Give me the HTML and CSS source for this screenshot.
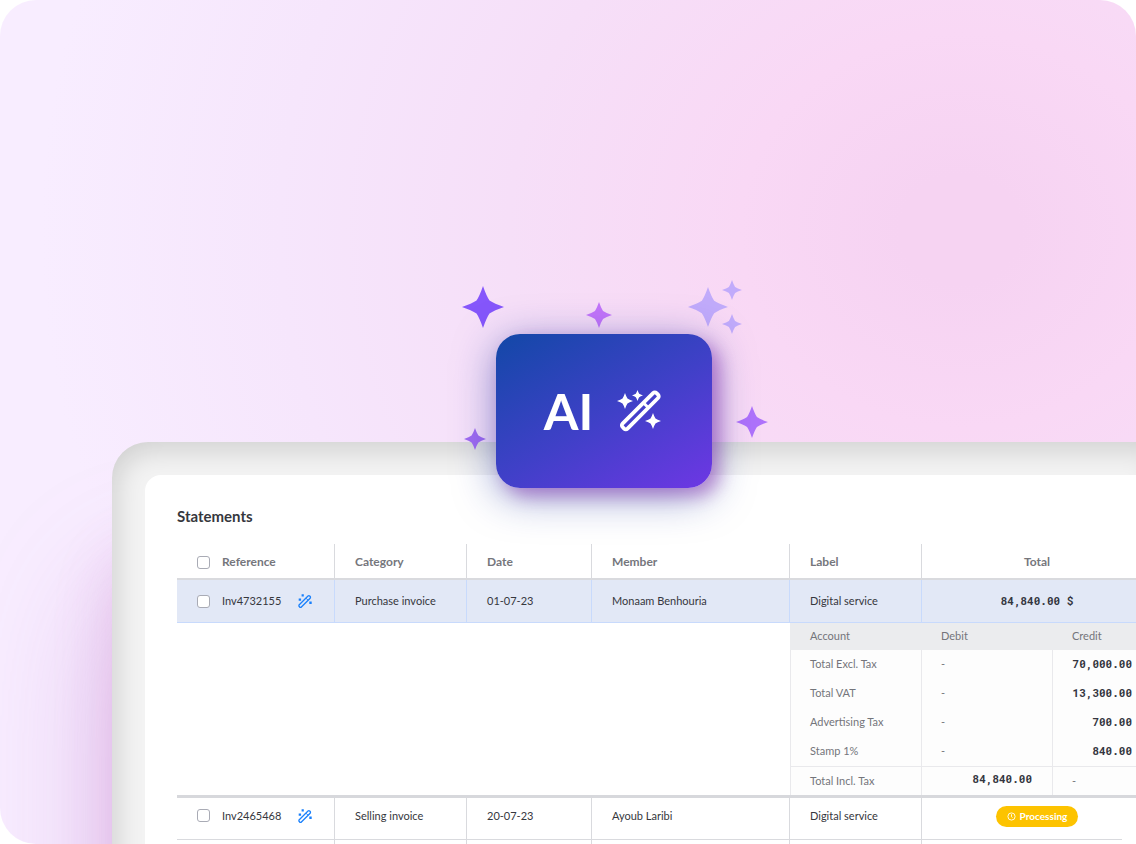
FILE: index.html
```html
<!DOCTYPE html>
<html lang="en">
<head>
<meta charset="utf-8">
<title>Statements</title>
<link rel="stylesheet" href="styles.css">
</head>
<body>
<svg class="defs" aria-hidden="true">
  <symbol id="star" viewBox="0 0 24 24"><path d="M12 0Q13.9 5.6 15.7 8.3Q18.4 10.1 24 12Q18.4 13.9 15.7 15.7Q13.9 18.4 12 24Q10.1 18.4 8.3 15.7Q5.6 13.9 0 12Q5.6 10.1 8.3 8.3Q10.1 5.6 12 0Z"/></symbol>
  <symbol id="wand" viewBox="0 0 14 14">
    <rect x="-7.4" y="-1.5" width="14.8" height="3" rx="1.2" transform="translate(6.7 7.5) rotate(-45)" fill="none" stroke="currentColor" stroke-width="1.3"/>
    <path d="M8 4.2l1.9 1.9" stroke="currentColor"/>
    <path d="M.7 4.4h2.4v2.4H.7zM3.6.2h2.2v2.2H3.6zM11.3 7.5h2.4v2.4h-2.4z"/>
  </symbol>
</svg>
<main class="stage">
  <section class="hero">
    <svg class="star star-a"><use href="#star"/></svg>
    <svg class="star star-b"><use href="#star"/></svg>
    <svg class="star star-c"><use href="#star"/></svg>
    <svg class="star star-d"><use href="#star"/></svg>
    <svg class="star star-e"><use href="#star"/></svg>
    <svg class="star star-f"><use href="#star"/></svg>
    <svg class="star star-g"><use href="#star"/></svg>
    <div class="ai-card">
      <span>AI</span>
      <svg class="ai-wand" viewBox="0 0 45 43">
        <rect x="-24" y="-3.5" width="48" height="7" rx="2.4" transform="translate(23.3 20.8) rotate(-45)" fill="none" stroke="#fff" stroke-width="3.8"/>
        <path d="M26.4 12.8l5.2 5.2" stroke="#fff" stroke-width="3"/>
        <use href="#star" x="0" y="3" width="16" height="16"/>
        <use href="#star" x="15" y="0" width="11" height="11"/>
        <use href="#star" x="28" y="23" width="16" height="16"/>
      </svg>
    </div>
  </section>
  <section class="device">
    <div class="screen">
      <h1>Statements</h1>
      <table class="statements">
        <colgroup><col class="c-ref"><col class="c-cat"><col class="c-date"><col class="c-member"><col class="c-label"><col></colgroup>
        <thead>
          <tr>
            <th><label class="ref"><input type="checkbox">Reference</label></th>
            <th>Category</th><th>Date</th><th>Member</th><th>Label</th><th class="center">Total</th>
          </tr>
        </thead>
        <tbody>
          <tr class="selected">
            <td><label class="ref"><input type="checkbox"><span>Inv4732155</span><svg class="wand"><use href="#wand"/></svg></label></td>
            <td>Purchase invoice</td><td>01-07-23</td><td>Monaam Benhouria</td><td>Digital service</td><td class="center money">84,840.00 $</td>
          </tr>
          <tr class="expanded">
            <td colspan="4"></td>
            <td colspan="2">
              <table class="detail">
                <colgroup><col class="d-account"><col class="d-debit"><col></colgroup>
                <thead><tr><th>Account</th><th>Debit</th><th>Credit</th></tr></thead>
                <tbody>
                  <tr><td>Total Excl. Tax</td><td>-</td><td class="money">70,000.00</td></tr>
                  <tr><td>Total VAT</td><td>-</td><td class="money">13,300.00</td></tr>
                  <tr><td>Advertising Tax</td><td>-</td><td class="money">700.00</td></tr>
                  <tr><td>Stamp 1%</td><td>-</td><td class="money">840.00</td></tr>
                </tbody>
                <tfoot><tr><td>Total Incl. Tax</td><td class="money">84,840.00</td><td>-</td></tr></tfoot>
              </table>
            </td>
          </tr>
          <tr class="plain">
            <td><label class="ref"><input type="checkbox"><span>Inv2465468</span><svg class="wand"><use href="#wand"/></svg></label></td>
            <td>Selling invoice</td><td>20-07-23</td><td>Ayoub Laribi</td><td>Digital service</td>
            <td class="center"><span class="badge"><svg viewBox="0 0 10 10"><circle cx="5" cy="5" r="4"/><path d="M5 2.5v2.8l1 1"/></svg>Processing</span></td>
          </tr>
          <tr class="plain"><td></td><td></td><td></td><td></td><td></td><td></td></tr>
        </tbody>
      </table>
    </div>
  </section>
</main>
</body>
</html>
```
FILE: styles.css
```css
* { box-sizing: border-box; }
body { margin: 0; background: #fff; color: #36373d; font: 11px/16px Lato, sans-serif; }
.defs { position: absolute; width: 0; height: 0; }

.stage {
  height: 100vh;
  display: flex;
  flex-direction: column;
  overflow: hidden;
  border-radius: 36px;
  border-bottom-right-radius: 0;
  background:
    radial-gradient(ellipse 1000px 900px at 960px 230px, #f6d3f2 0%, #f6d3f2 6%, #f9d8f5 22%, #f6dff8 45%, #f6e6fc 68%, #f8edff 92%);
}
.hero { position: relative; z-index: 1; flex: 0 0 442px; }

.ai-card {
  position: absolute;
  left: 496px;
  top: 334px;
  width: 216px;
  height: 154px;
  border-radius: 24px;
  display: flex;
  align-items: center;
  justify-content: center;
  gap: 24px;
  padding-right: 2px;
  color: #fff;
  font-size: 50px;
  line-height: 56px;
  font-weight: 700;
  background: linear-gradient(150deg, #1248a7 0%, #4040c8 53%, #6e37e4 100%);
  box-shadow: 8px 8px 16px rgba(142, 40, 175, .4), 0 8px 40px rgba(30, 50, 155, .5);
}
.ai-wand { width: 45px; height: 43px; fill: #fff; }

.star { position: absolute; }
.star-a { left: 462px; top: 286px; width: 42px; height: 42px; fill: #8556fb; }
.star-b { left: 586px; top: 302px; width: 26px; height: 26px; fill: #c375fa; }
.star-c { left: 688px; top: 287px; width: 40px; height: 40px; fill: #c1abfb; }
.star-d { left: 722px; top: 280px; width: 20px; height: 20px; fill: #c1abfb; }
.star-e { left: 722px; top: 314px; width: 20px; height: 20px; fill: #c1abfb; }
.star-f { left: 736px; top: 406px; width: 32px; height: 32px; fill: #ae72fb; }
.star-g { left: 464px; top: 428px; width: 22px; height: 22px; fill: #a06bf2; }

.device {
  flex: 1 0 auto;
  margin: 0 -16px 0 112px;
  padding: 33px 0 0 33px;
  border-top-left-radius: 36px;
  background: #f3f3f3;
  box-shadow: inset 4px 8px 28px rgba(0, 0, 0, .15), 0 110px 60px rgba(190, 80, 180, .2), 0 150px 140px rgba(170, 90, 190, .32);
}
.screen {
  height: 100%;
  padding: 31px 0 0 32px;
  border-top-left-radius: 16px;
  background: #fff;
}
h1 { margin: 0 0 18px; font-size: 15px; line-height: 20px; font-weight: 700; }

table { width: 100%; border-collapse: separate; border-spacing: 0; table-layout: fixed; }
th, td { padding: 0 0 0 20px; text-align: left; font-weight: 400; border: 0 solid #d9dade; }
.c-ref { width: 158px; }
.c-cat { width: 132px; }
.c-date { width: 125px; }
.c-member { width: 198px; }
.c-label { width: 132px; }

.statements > thead th { height: 36px; padding-top: 2px; border-bottom-width: 2px; border-right-width: 1px; color: #75767c; font-size: 12px; font-weight: 700; }
.selected td { height: 43px; background: #e2e8f6; border-color: #c8dafc; border-width: 0 1px 1px 0; }
.plain td { height: 42px; padding-bottom: 6px; border-width: 0 1px 1px 0; }
.statements th:last-child, .selected td:last-child, .plain td:last-child { border-right-width: 0; }
.statements .center { text-align: center; padding-left: 0; }
.plain td:last-child { border-bottom: 0; background: linear-gradient(#d9dade, #d9dade) left bottom / calc(100% - 30px) 1px no-repeat; }
.expanded > td { padding: 0; border-bottom: 3px solid #d7d8dc; vertical-align: top; }

.ref { display: flex; align-items: center; gap: 12px; }
.ref .wand { margin-left: 5px; }
.wand { width: 14px; height: 14px; color: #1a80fb; fill: #1a80fb; }
input[type="checkbox"] {
  appearance: none;
  width: 13px;
  height: 13px;
  margin: 0;
  border: 1px solid #a9abb5;
  border-radius: 3px;
  background: #fff;
}
.money { font: 700 11px/16px "Roboto Mono", "Liberation Mono", monospace; color: #34363f; }

.d-account { width: 131px; }
.d-debit { width: 131px; }
.detail { color: #74757b; }
.detail th { height: 27px; padding-bottom: 2px; background: #ebecee; }
.detail td { height: 29px; padding-left: 19px; border-color: #e9e9ec; border-left-width: 1px; background: #fdfdfd; }
.detail tbody td { padding-bottom: 2px; }
.detail tfoot td { height: 29px; border-top-width: 1px; }
.detail .money { text-align: right; padding-right: 20px; }
.detail tfoot .money { padding-bottom: 4px; }

.badge {
  display: inline-flex;
  align-items: center;
  gap: 4px;
  height: 21px;
  padding: 0 11px;
  border-radius: 11px;
  background: #fdc300;
  color: #fff;
  font-size: 10px;
  font-weight: 700;
}
.badge svg { width: 9px; height: 9px; fill: none; stroke: #fff; }
```
